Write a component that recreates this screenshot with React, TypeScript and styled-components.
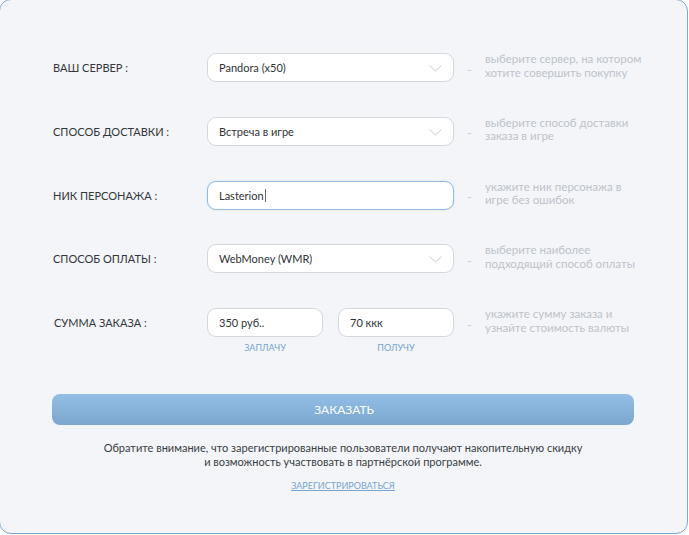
import React from "react";
import styled, { createGlobalStyle } from "styled-components";

const Global = createGlobalStyle`
  html, body { margin: 0; padding: 0; background: #ffffff; }
  body { font-family: Lato, "Open Sans", "Liberation Sans", sans-serif; overflow: hidden; }
  * { box-sizing: border-box; }
`;

const Card = styled.div`
  margin: -1px 0 0 -1px;
  width: 689px;
  height: 535px;
  background: #f3f5f9;
  border: 1px solid #7da8d0;
  border-radius: 12px;
  padding: 53px 0 0 53px;
  display: flex;
  flex-direction: column;
`;

const Rows = styled.div`
  display: flex;
  flex-direction: column;
  gap: 34.75px;
`;

const Row = styled.div`
  display: grid;
  grid-template-columns: 154px 247px 31px 180px;
  align-items: start;
`;

const Cell = styled.div`
  height: 29px;
  display: flex;
  align-items: center;
`;

const Label = styled(Cell)<{ $shift?: number }>`
  font-size: 11px;
  color: #33373a;
  padding-left: ${(p) => p.$shift ?? 0}px;
`;

const Box = styled.div<{ $active?: boolean }>`
  position: relative;
  height: 29px;
  width: 100%;
  background: #ffffff;
  border: 1px solid ${(p) => (p.$active ? "#93b9de" : "#d3d8df")};
  border-radius: 9px;
  display: flex;
  align-items: center;
  padding-left: 11px;
  font-size: 11px;
  color: #2f3336;
  box-shadow: ${(p) => (p.$active ? "0 0 2px rgba(120,165,210,0.3)" : "none")};
`;

const Chevron = styled.svg`
  position: absolute;
  right: 11px;
  top: 11px;
`;

const Caret = styled.span`
  display: inline-block;
  width: 1px;
  height: 13px;
  background: #666a6e;
  margin-left: 1px;
`;

const Dash = styled(Cell)`
  justify-content: center;
  color: #c4c8ce;
  font-size: 12px;
  padding-top: 3px;
`;

const Hint = styled.div`
  margin-top: -1px;
  font-size: 11.5px;
  line-height: 13.5px;
  color: #bec3ca;
  white-space: nowrap;
`;

const Pair = styled.div`
  display: flex;
  gap: 15px;
`;

const Field = styled.div`
  width: 116px;
  display: flex;
  flex-direction: column;
  align-items: center;
`;

const Caption = styled.div`
  margin-top: 5px;
  font-size: 9px;
  line-height: 12px;
  color: #78a4cf;
`;

const Submit = styled.button`
  margin-top: 40px;
  margin-left: -1px;
  width: 582px;
  height: 31px;
  border: none;
  border-radius: 8px;
  background: linear-gradient(to bottom, #93bee5, #7ba6cd);
  color: #ffffff;
  font-family: inherit;
  font-size: 12px;
  padding-left: 8px;
  cursor: pointer;
`;

const Note = styled.p`
  margin: 16px 0 0 -1px;
  width: 582px;
  text-align: center;
  font-size: 11px;
  line-height: 14px;
  color: #3a3e42;
`;

const Register = styled.a`
  margin: 11px 0 0 -1px;
  width: 582px;
  text-align: center;
  font-size: 9px;
  line-height: 12px;
  color: #78a4cf;
  text-decoration: underline;
`;

const Arrow = () => (
  <Chevron width="13" height="7" viewBox="0 0 13 7">
    <path d="M0.5 0.5 L6.5 6 L12.5 0.5" fill="none" stroke="#c9cdd3" strokeWidth="1" />
  </Chevron>
);

type RowProps = { label: string; hint: [string, string]; children: React.ReactNode; shift?: number };

const FormRow = ({ label, hint, children, shift }: RowProps) => (
  <Row>
    <Label $shift={shift}>{label}</Label>
    <div>{children}</div>
    <Dash>-</Dash>
    <Hint>
      {hint[0]}
      <br />
      {hint[1]}
    </Hint>
  </Row>
);

export default function App() {
  return (
    <>
      <Global />
      <Card>
        <Rows>
          <FormRow label="ВАШ СЕРВЕР :" hint={["выберите сервер, на котором", "хотите совершить покупку"]}>
            <Box>
              Pandora (x50)
              <Arrow />
            </Box>
          </FormRow>
          <FormRow label="СПОСОБ ДОСТАВКИ :" hint={["выберите способ доставки", "заказа в игре"]}>
            <Box>
              Встреча в игре
              <Arrow />
            </Box>
          </FormRow>
          <FormRow label="НИК ПЕРСОНАЖА :" hint={["укажите ник персонажа в", "игре без ошибок"]}>
            <Box $active>
              Lasterion
              <Caret />
            </Box>
          </FormRow>
          <FormRow label="СПОСОБ ОПЛАТЫ :" hint={["выберите наиболее", "подходящий способ оплаты"]}>
            <Box>
              WebMoney (WMR)
              <Arrow />
            </Box>
          </FormRow>
          <FormRow label="СУММА ЗАКАЗА :" shift={1} hint={["укажите сумму заказа и", "узнайте стоимость валюты"]}>
            <Pair>
              <Field>
                <Box>350 руб..</Box>
                <Caption>ЗАПЛАЧУ</Caption>
              </Field>
              <Field>
                <Box>70 ккк</Box>
                <Caption>ПОЛУЧУ</Caption>
              </Field>
            </Pair>
          </FormRow>
        </Rows>
        <Submit>ЗАКАЗАТЬ</Submit>
        <Note>
          Обратите внимание, что зарегистрированные пользователи получают накопительную скидку
          <br />
          и возможность участвовать в партнёрской программе.
        </Note>
        <Register href="#">ЗАРЕГИСТРИРОВАТЬСЯ</Register>
      </Card>
    </>
  );
}
